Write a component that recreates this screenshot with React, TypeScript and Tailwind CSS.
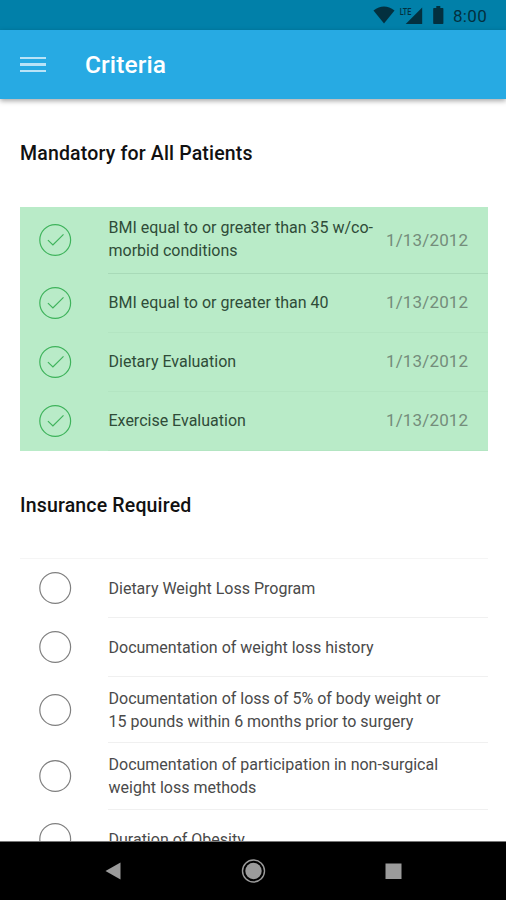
interface Criterion {
  label: string
  date?: string
  tall?: boolean
}

const mandatory: Criterion[] = [
  { label: "BMI equal to or greater than 35 w/co-morbid conditions", date: "1/13/2012", tall: true },
  { label: "BMI equal to or greater than 40", date: "1/13/2012" },
  { label: "Dietary Evaluation", date: "1/13/2012" },
  { label: "Exercise Evaluation", date: "1/13/2012" },
]

const insurance: Criterion[] = [
  { label: "Dietary Weight Loss Program" },
  { label: "Documentation of weight loss history" },
  { label: "Documentation of loss of 5% of body weight or 15 pounds within 6 months prior to surgery", tall: true },
  { label: "Documentation of participation in non-surgical weight loss methods", tall: true },
  { label: "Duration of Obesity" },
]

function StatusBar() {
  return (
    <div className="flex h-[30px] shrink-0 items-center bg-[#0180a9] pr-[19px] text-[#03303f]">
      <svg className="ml-auto h-[30px] w-[80px]" viewBox="0 0 80 30" fill="currentColor">
        {/* wifi */}
        <path d="M6.5 10.6Q17 2.6 27.5 10.6L17 23.5Z" />
        {/* signal */}
        <path d="M55.2 7.5V24H38.7Z" />
        <text x="32.8" y="14.5" fontSize="9" fontWeight="500" textLength="11.5" lengthAdjust="spacingAndGlyphs" fontFamily="Roboto, sans-serif">
          LTE
        </text>
        {/* battery */}
        <path d="M69.3 6h4v2h2.3q.8 0 .8.8v14.4q0 .8-.8.8h-8.6q-.8 0-.8-.8V8.8q0-.8.8-.8h2.3z" />
      </svg>
      <span className="ml-[6px] pt-[2px] text-[17px] leading-none tracking-[0.3px]">8:00</span>
    </div>
  )
}

function Mark({ checked }: { checked: boolean }) {
  return (
    <svg
      className={`h-[34px] w-[34px] shrink-0 ${checked ? "text-[#3fb35c]" : "text-[#808080]"}`}
      viewBox="0 0 34 34"
      fill="none"
      stroke="currentColor"
      strokeWidth={1.2}
    >
      <circle cx="17.2" cy="17" r="15.4" />
      {checked && <path d="M9.9 17.1l5 4.8L25.5 11.3" />}
    </svg>
  )
}

function Row({ item, done, line }: { item: Criterion; done: boolean; line: string }) {
  return (
    <li className={`flex items-center pl-[18px] ${item.tall ? "h-[66.5px]" : "h-[59px]"}`}>
      <Mark checked={done} />
      <div className={`ml-9 flex h-full min-w-0 flex-1 items-center border-b pl-[0.5px] ${line}`}>
        <span
          className={`text-base leading-[23px] ${item.tall && done ? "pb-px" : ""} ${
            done ? "w-[277.5px] text-[#2f4c38]" : "w-[345px] pt-px text-[#4a4a4a]"
          }`}
        >
          {item.label}
        </span>
        {item.date && <span className="pt-px text-[17px] tracking-[0.15px] text-[#748d7b]">{item.date}</span>}
      </div>
    </li>
  )
}

function NavBar() {
  return (
    <div className="flex h-[59px] shrink-0 border-t border-[#777777] bg-black text-[#9b9b9b]">
      <svg className="h-[58px] w-[506px]" viewBox="0 0 506 58" fill="currentColor">
        <path d="M105.5 29L120.5 20.5V37.5Z" />
        <circle cx="253.5" cy="29" r="8.2" />
        <circle cx="253.5" cy="29" r="11" fill="none" stroke="currentColor" strokeWidth={1.4} />
        <rect x="385.5" y="21.5" width="16" height="15.5" />
      </svg>
    </div>
  )
}

export default function App() {
  return (
    <div className="flex h-[900px] w-[506px] flex-col overflow-hidden bg-white font-['Roboto',sans-serif]">
      <StatusBar />
      <header className="z-10 flex h-[69px] shrink-0 items-center bg-[#27aae3] pl-5 text-white shadow-[0_2px_5px_rgba(0,0,0,0.35)]">
        <button className="flex w-[26px] flex-col gap-1" aria-label="Open menu">
          <span className="h-[2.5px] bg-[#b9e3f7]" />
          <span className="h-[2.5px] bg-[#b9e3f7]" />
          <span className="h-[2.5px] bg-[#b9e3f7]" />
        </button>
        <h1 className="ml-[39px] pt-0.5 text-[24.5px] font-medium tracking-[0.1px]">Criteria</h1>
      </header>

      <main className="min-h-0 flex-1 overflow-hidden pr-[18px] pl-5">
        <h2 className="flex h-[108px] items-center pt-0.5 text-[19.5px] font-medium tracking-[0.17px] text-[#111111]">
          Mandatory for All Patients
        </h2>
        <ul className="bg-[#b9ebc8]">
          {mandatory.map((item, i) => (
            <Row key={item.label} item={item} done line={i === 0 ? "border-[#a8dab8]" : "border-[#b3e5c2]"} />
          ))}
        </ul>

        <h2 className="flex h-[107px] items-center pt-1 text-[19.5px] font-medium tracking-[0.17px] text-[#111111]">
          Insurance Required
        </h2>
        <ul className="border-t border-[#f5f5f5]">
          {insurance.map((item) => (
            <Row key={item.label} item={item} done={false} line="border-[#f0f0f0]" />
          ))}
        </ul>
      </main>

      <NavBar />
    </div>
  )
}
